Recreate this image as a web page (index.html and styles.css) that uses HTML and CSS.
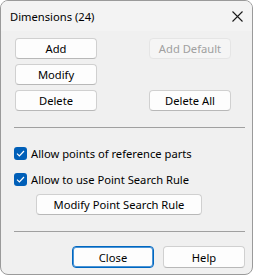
FILE: index.html
```html
<!DOCTYPE html>
<html lang="en">
<head>
    <meta charset="UTF-8">
    <meta name="viewport" content="width=device-width, initial-scale=1.0">
    <title>Dimensions (24)</title>
    <link rel="stylesheet" href="styles.css">
</head>
<body>
    <div class="window">
        <div class="titlebar">
            <span class="title">Dimensions (24)</span>
            <span class="close-x">
                <svg width="11" height="11" viewBox="0 0 11 11">
                    <path d="M0.5 0.5 L10.5 10.5 M10.5 0.5 L0.5 10.5" stroke="#1a1a1a" stroke-width="1.1" fill="none"/>
                </svg>
            </span>
        </div>
        <div class="content">
            <div class="button-grid">
                <button class="btn">Add</button>
                <button class="btn" disabled>Add Default</button>
                <button class="btn">Modify</button>
                <span></span>
                <button class="btn">Delete</button>
                <button class="btn">Delete All</button>
            </div>
            <div class="separator"></div>
            <div class="options">
                <label class="check-row"><span class="check"><svg width="9" height="7" viewBox="0 0 9 7"><path d="M1 3.6 L3.4 6 L8 1" stroke="#fff" stroke-width="1.2" fill="none"/></svg></span>Allow points of reference parts</label>
                <label class="check-row"><span class="check"><svg width="9" height="7" viewBox="0 0 9 7"><path d="M1 3.6 L3.4 6 L8 1" stroke="#fff" stroke-width="1.2" fill="none"/></svg></span>Allow to use Point Search Rule</label>
                <button class="btn wide">Modify Point Search Rule</button>
            </div>
            <div class="separator"></div>
            <div class="footer">
                <button class="btn default">Close</button>
                <button class="btn">Help</button>
            </div>
        </div>
    </div>
</body>
</html>
```

FILE: styles.css
```css
body {
    margin: 0;
    padding: 0;
    background-color: #ffffff;
    font-family: "Noto Sans", "Liberation Sans", sans-serif;
    font-size: 11.2px;
    color: #000000;
}
.window {
    width: 253px;
    height: 275px;
    box-sizing: border-box;
    border: 1px solid #9a9a9a;
    border-radius: 8px;
    background-color: #f0f0f0;
    overflow: hidden;
}
.titlebar {
    height: 30px;
    display: flex;
    align-items: center;
    justify-content: space-between;
    padding: 0 9px 0 9px;
    background-color: #f3f3f3;
}
.title {
    margin-top: 1px;
}
.close-x {
    display: flex;
    margin-top: 1px;
}
.content {
    padding: 7px 0 0 0;
}
.button-grid {
    display: grid;
    grid-template-columns: 82px 82px;
    grid-auto-rows: 21px;
    column-gap: 52px;
    row-gap: 5px;
    margin-left: 14px;
}
.btn {
    font-family: "Noto Sans", "Liberation Sans", sans-serif;
    font-size: 11.2px;
    color: #000000;
    background-color: #fdfdfd;
    border: 1px solid #d0d0d0;
    border-bottom-color: #b8b8b8;
    border-radius: 4px;
    height: 21px;
    padding: 0;
    line-height: 17px;
}
.btn:disabled {
    background-color: #f5f5f5;
    border-color: #e5e5e5;
    color: #a0a0a0;
}
.separator {
    height: 1px;
    background-color: #a0a0a0;
    margin: 16px 7px 0 13px;
}
.options {
    display: flex;
    flex-direction: column;
    align-items: flex-start;
    padding: 19px 0 0 13px;
}
.check-row {
    display: flex;
    align-items: center;
    height: 13px;
    margin-bottom: 13px;
}
.check-row:nth-child(2) {
    margin-bottom: 8px;
}
.check {
    width: 13px;
    height: 13px;
    box-sizing: border-box;
    border-radius: 3px;
    background-color: #005fb8;
    display: flex;
    align-items: center;
    justify-content: center;
    margin-right: 4px;
}
.btn.wide {
    width: 166px;
    margin-left: 22px;
}
.footer {
    display: flex;
    justify-content: flex-end;
    gap: 9px;
    padding: 14px 7px 0 0;
}
.footer .btn {
    width: 82px;
    height: 22px;
}
.btn.default {
    border: 1px solid #0067c0;
    box-shadow: inset 0 0 0 1px #4a94d6;
}
```
